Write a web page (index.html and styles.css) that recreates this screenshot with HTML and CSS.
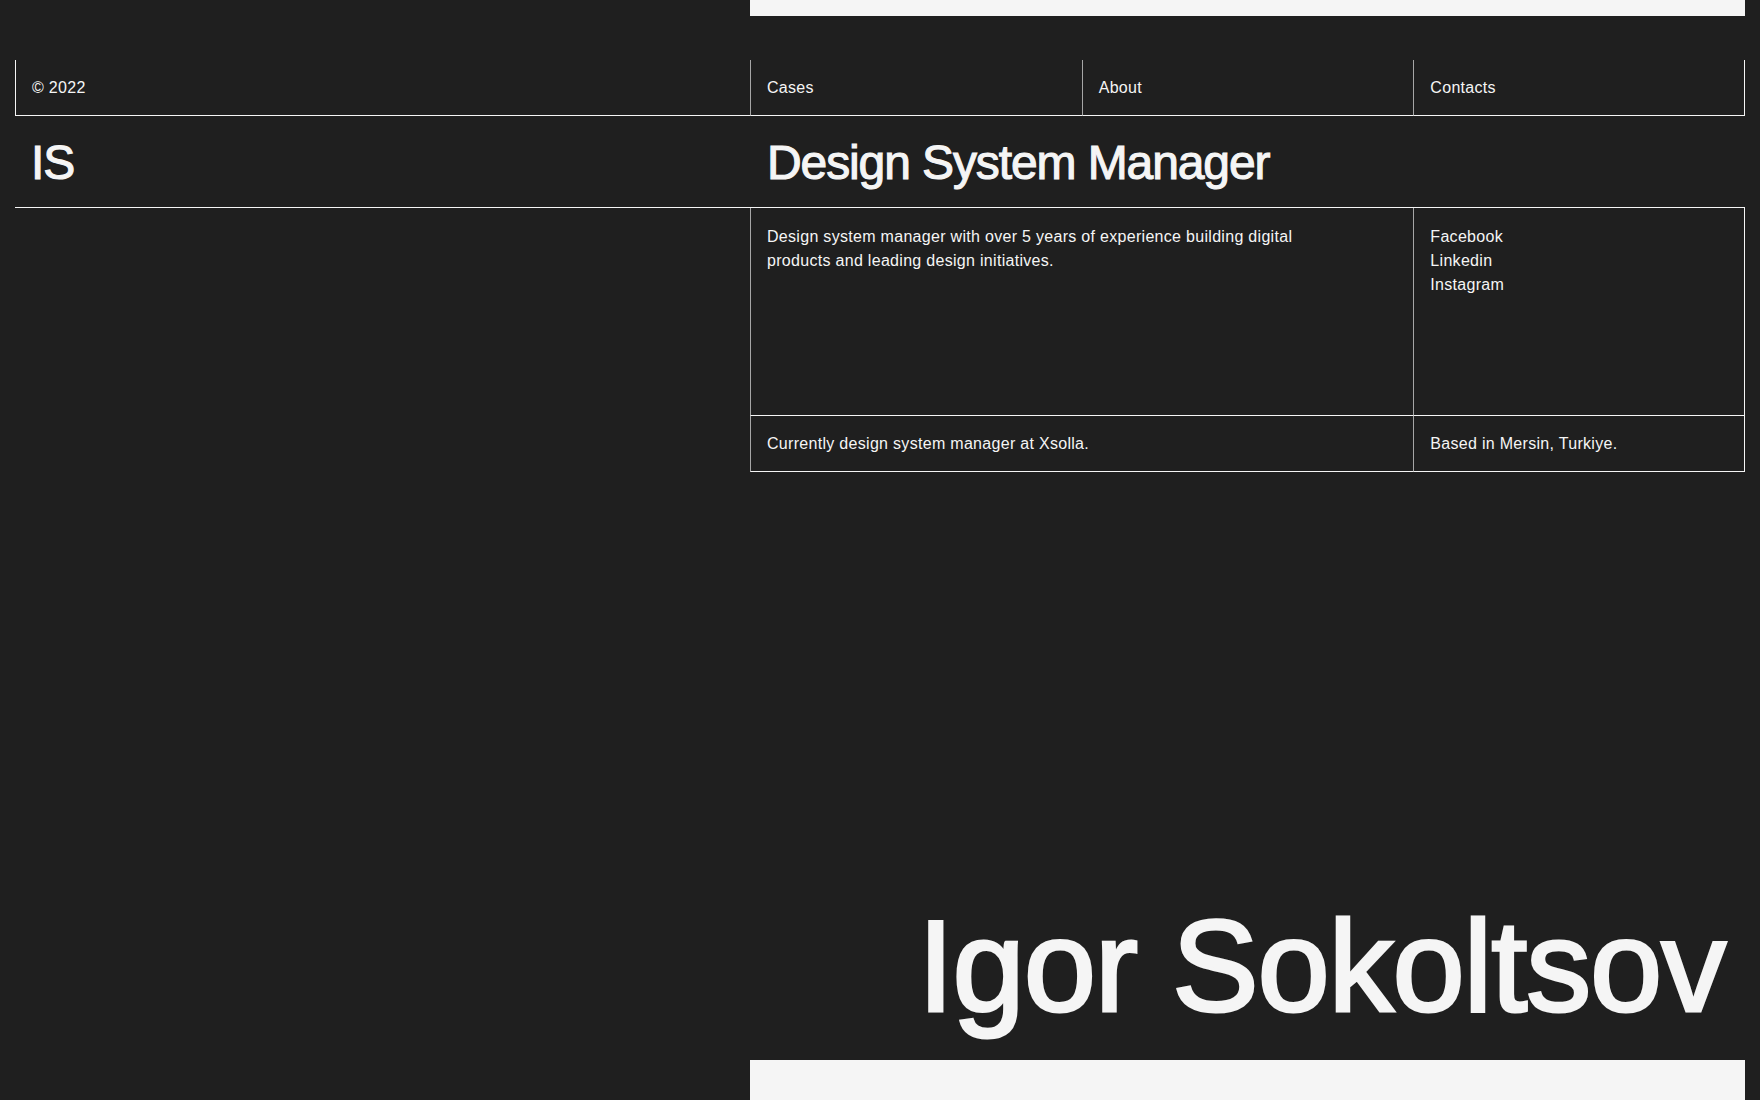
FILE: index.html
```html
<!DOCTYPE html>
<html lang="en">
<head>
<meta charset="utf-8">
<title>Igor Sokoltsov — Design System Manager</title>
<link rel="stylesheet" href="styles.css">
</head>
<body>
<div class="page">
  <div class="grid">
    <div class="top-bar"></div>

    <div class="cell nav-copy">© 2022</div>
    <a class="cell nav-link inner" href="#">Cases</a>
    <a class="cell nav-link inner" href="#">About</a>
    <a class="cell nav-link inner last" href="#">Contacts</a>

    <div class="title-row">
      <div class="logo">IS</div>
      <h1 class="role">Design System Manager</h1>
    </div>

    <div class="cell desc inner">
      <p class="desc-text">Design system manager with over 5 years of experience building digital products and leading design initiatives.</p>
    </div>
    <div class="cell social inner last">
      <a href="#">Facebook</a>
      <a href="#">Linkedin</a>
      <a href="#">Instagram</a>
    </div>

    <div class="cell info wide inner">Currently design system manager at Xsolla.</div>
    <div class="cell info inner last">Based in Mersin, Turkiye.</div>
  </div>

  <div class="footer">
    <div class="name">Igor Sokoltsov</div>
    <div class="bottom-bar"></div>
  </div>
</div>
</body>
</html>
```

FILE: styles.css
```css
html, body {
  margin: 0;
  padding: 0;
  background: #1f1f1f;
}

body {
  color: #f5f5f5;
  font-family: "Liberation Sans", Arial, Helvetica, sans-serif;
  font-size: 16px;
  line-height: 24px;
  letter-spacing: 0.3px;
  overflow: hidden;
}

.page {
  height: 100vh;
  padding: 0 15px;
  display: flex;
  flex-direction: column;
  box-sizing: border-box;
}

.grid {
  display: grid;
  grid-template-columns: 735px 1fr 1fr 1fr;
}

.top-bar {
  grid-column: 2 / 5;
  height: 16px;
  background: #f5f5f5;
  margin-bottom: 44px;
}

.cell {
  padding: 16px 16px 15px;
  border-bottom: 1px solid #f5f5f5;
  color: #f5f5f5;
  text-decoration: none;
}

.nav-copy {
  border-left: 1px solid #f5f5f5;
}

.inner {
  border-left: 1px solid #a6a6a6;
}

.last {
  border-right: 1px solid #f5f5f5;
}

.title-row {
  grid-column: 1 / 5;
  display: grid;
  grid-template-columns: 735px 1fr;
  border-bottom: 1px solid #f5f5f5;
}

.logo,
.role {
  margin: 0;
  padding: 19px 16px 16px 16px;
  font-size: 48px;
  line-height: 56px;
  font-weight: 400;
  letter-spacing: -0.023em;
  -webkit-text-stroke: 1.1px #f5f5f5;
}

.role {
  padding-left: 17px;
}

.desc,
.social {
  box-sizing: border-box;
  height: 208px;
  padding-top: 17px;
}

.desc {
  grid-column: 2 / 4;
}

.desc-text {
  margin: 0;
  max-width: 560px;
}

.social {
  display: flex;
  flex-direction: column;
}

.social a {
  color: #f5f5f5;
  text-decoration: none;
}

.info.wide {
  grid-column: 2 / 4;
}

.footer {
  margin-top: auto;
  display: grid;
  grid-template-columns: 735px 1fr;
}

.name {
  grid-column: 2;
  text-align: right;
  font-size: 130px;
  line-height: 132px;
  letter-spacing: -0.009em;
  padding-right: 20px;
  padding-bottom: 28px;
  white-space: nowrap;
  -webkit-text-stroke: 3px #f5f5f5;
}

.bottom-bar {
  grid-column: 2;
  height: 40px;
  background: #f5f5f5;
}
```
